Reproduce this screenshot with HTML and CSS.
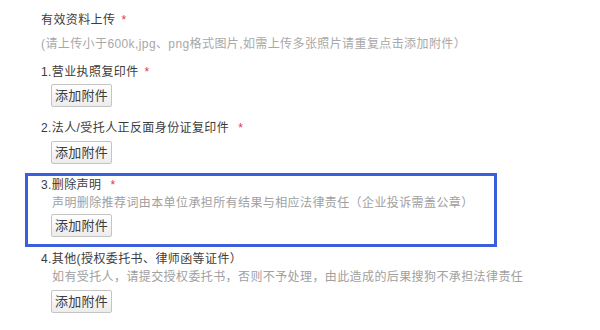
FILE: index.html
```html
<!DOCTYPE html>
<html lang="zh-CN">
<head>
<meta charset="utf-8">
<link rel="stylesheet" href="styles.css">
</head>
<body>
<div class="form">
  <div class="title">有效资料上传<span class="star">*</span></div>
  <div class="hint">(请上传小于600k,jpg、png格式图片,如需上传多张照片请重复点击添加附件）</div>

  <div class="item item1">
    <div class="label">1.营业执照复印件<span class="star">*</span></div>
    <button class="btn" type="button">添加附件</button>
  </div>

  <div class="item item2">
    <div class="label">2.法人/受托人正反面身份证复印件<span class="star wide">*</span></div>
    <button class="btn" type="button">添加附件</button>
  </div>

  <div class="item item3 selected">
    <div class="label">3.删除声明<span class="star wide">*</span></div>
    <div class="desc">声明删除推荐词由本单位承担所有结果与相应法律责任（企业投诉需盖公章）</div>
    <button class="btn" type="button">添加附件</button>
  </div>

  <div class="item item4">
    <div class="label">4.其他(授权委托书、律师函等证件）</div>
    <div class="desc">如有受托人，请提交授权委托书，否则不予处理，由此造成的后果搜狗不承担法律责任</div>
    <button class="btn" type="button">添加附件</button>
  </div>
</div>
</body>
</html>
```

FILE: styles.css
```css
html, body {
  margin: 0;
  padding: 0;
  background: #ffffff;
}

body {
  width: 600px;
  height: 330px;
  overflow: hidden;
  font-family: "Liberation Sans", "Noto Sans CJK SC", sans-serif;
  font-size: 12px;
  letter-spacing: 0.4px;
  color: #3c3c3c;
}

.form {
  display: flex;
  flex-direction: column;
  align-items: flex-start;
  padding: 11px 0 0 41px;
}

.title {
  line-height: 18px;
  height: 18px;
}

.hint {
  margin-top: 6px;
  line-height: 18px;
  color: #a8a8a8;
}

.star {
  color: #e2364a;
  margin-left: 6px;
  font-size: 12px;
}

.star.wide {
  margin-left: 9px;
}

.item {
  display: flex;
  flex-direction: column;
  align-items: flex-start;
}

.item1 {
  margin-top: 10px;
}

.item2 {
  margin-top: 12px;
}

.item4 {
  margin-top: 3px;
}

.label {
  line-height: 18px;
  height: 18px;
}

.desc {
  margin-left: 11px;
  line-height: 18px;
  color: #a0a0a0;
}

.btn {
  margin: 3px 0 0 10px;
  height: 23px;
  width: 61px;
  padding: 0;
  border: 1px solid #c4c4c4;
  border-radius: 2px;
  background: linear-gradient(#ffffff, #ececec);
  font-family: "Liberation Sans", "Noto Sans CJK SC", sans-serif;
  font-size: 13px;
  letter-spacing: 0.3px;
  color: #3c3c3c;
  line-height: 21px;
}

.item2 .btn {
  margin-top: 4px;
}

.selected {
  margin-top: 9px;
  margin-left: -16px;
  width: 472px;
  box-sizing: border-box;
  border: 3px solid #3d5ddf;
  padding: 0 0 7px 13px;
}

.selected .btn {
  margin-top: 2px;
}

.item4 .btn {
  margin-top: 4px;
}
```
